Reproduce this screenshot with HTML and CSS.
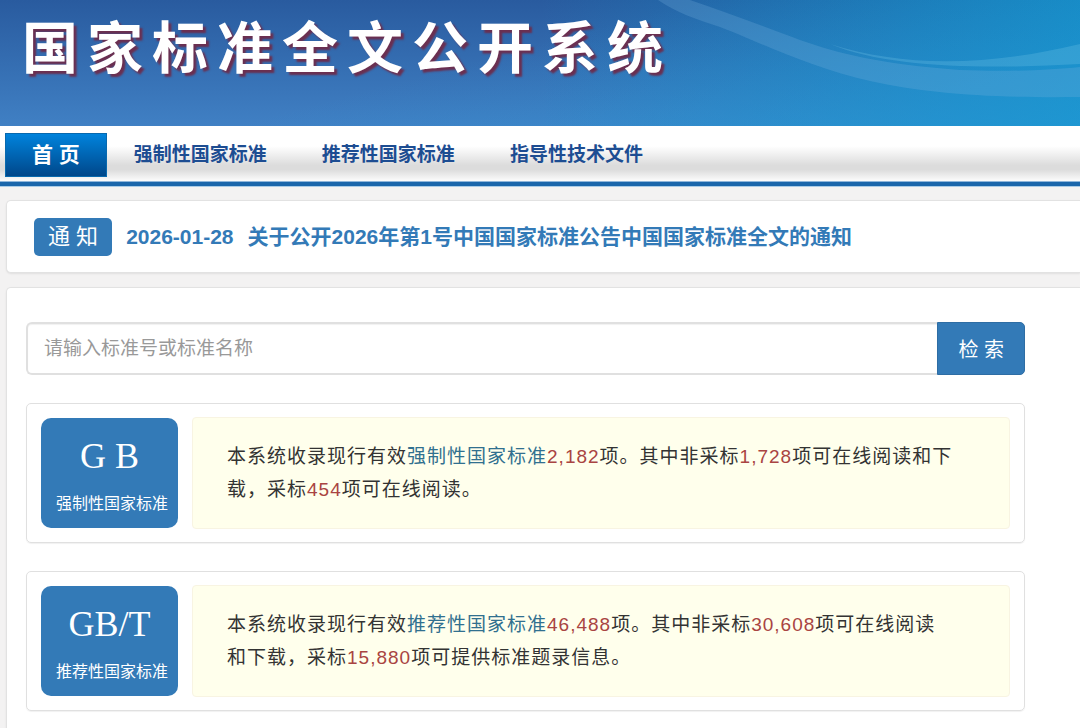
FILE: index.html
```html
<!DOCTYPE html>
<html lang="zh-CN">
<head>
<meta charset="utf-8">
<meta name="viewport" content="width=device-width, initial-scale=1">
<title>国家标准全文公开系统</title>
<link rel="stylesheet" href="styles.css">
</head>
<body class="page">
<header class="banner">
  <svg class="banner-art" viewBox="0 0 440 126" width="440" height="126" aria-hidden="true">
    <path d="M18 0 H50 C85 12 120 25 160 40 C200 54 240 64 320 70 C370 72 410 70 440 67 V97 C350 98 290 94 230 81 C170 68 110 38 80 27 C58 20 35 12 18 0Z" fill="#7bb4e0" fill-opacity=".25"/>
    <path d="M190 44 C260 66 340 68 440 44 V64 C350 69 250 69 190 44Z" fill="#7bcbec" fill-opacity=".25"/>
  </svg>
  <h1 class="banner-title">国家标准全文公开系统</h1>
</header>
<nav class="nav" aria-label="主导航">
  <a class="nav-link nav-link-active" href="#" aria-current="page">首 页</a>
  <a class="nav-link" href="#gb">强制性国家标准</a>
  <a class="nav-link" href="#gbt">推荐性国家标准</a>
  <a class="nav-link" href="#gbz">指导性技术文件</a>
</nav>
<section class="panel notice">
  <span class="notice-tag">通 知</span>
  <a class="notice-link" href="#notice"><time>2026-01-28</time><span>关于公开2026年第1号中国国家标准公告中国国家标准全文的通知</span></a>
</section>
<main class="panel content">
  <form class="search" role="search">
    <input class="search-input" type="text" aria-label="标准号或标准名称" placeholder="请输入标准号或标准名称">
    <button class="search-button" type="submit">检 索</button>
  </form>
  <section class="card" id="gb">
    <a class="badge" href="#gb"><span class="badge-code">G B</span><span class="badge-name">强制性国家标准</span></a>
    <p class="summary">本系统收录现行有效<a class="summary-link" href="#gb">强制性国家标准</a><span class="count">2,182</span>项。其中非采标<span class="count">1,728</span>项可在线阅读和下载，采标<span class="count">454</span>项可在线阅读。</p>
  </section>
  <section class="card" id="gbt">
    <a class="badge" href="#gbt"><span class="badge-code">GB/T</span><span class="badge-name">推荐性国家标准</span></a>
    <p class="summary">本系统收录现行有效<a class="summary-link" href="#gbt">推荐性国家标准</a><span class="count">46,488</span>项。其中非采标<span class="count">30,608</span>项可在线阅读和下载，采标<span class="count">15,880</span>项可提供标准题录信息。</p>
  </section>
</main>
</body>
</html>
```

FILE: styles.css
```css
* {
  box-sizing: border-box;
}

.page {
  display: flex;
  flex-direction: column;
  min-height: 100vh;
  margin: 0;
  background: #f3f2f2;
  color: #333;
  font-family: "Liberation Sans", "Noto Sans CJK SC", sans-serif;
}

a {
  text-decoration: none;
}

.banner {
  position: relative;
  min-height: 126px;
  padding: 9px 22px;
  background:
    linear-gradient(165deg, transparent 45%, rgb(36 160 220 / 45%) 100%),
    linear-gradient(to right, transparent 50%, rgb(16 146 202 / 80%) 100%),
    linear-gradient(#295b9f, #4080c4);
}

.banner-art {
  position: absolute;
  top: 0;
  right: 0;
}

.banner-title {
  position: relative;
  margin: 0;
  color: #fff;
  font-size: 56px;
  font-weight: 700;
  line-height: 80px;
  letter-spacing: 9px;
  text-shadow: 3px 3px 2px #6b2f50;
}

.nav {
  display: flex;
  align-items: center;
  gap: 55px;
  height: 60px;
  padding: 2px 5px 0;
  border-bottom: 4px solid #1a66ab;
  background: linear-gradient(#fff 36%, #dcdcdc 70%, #dcdcdc 78%, #fff);
  box-shadow: inset 0 -1px 0 #8fb6da, 0 1px 0 #a9cbe6;
}

.nav-link {
  color: #1d4d92;
  font-size: 19px;
  font-weight: 700;
  line-height: 44px;
}

.nav-link-active {
  margin-right: -28px;
  padding: 0 26px;
  border: 1px solid #0869ae;
  background: linear-gradient(#0083dc, #00478a);
  color: #fff;
  font-size: 21px;
  line-height: 42px;
}

.panel {
  margin-left: 6px;
  border: 1px solid #e2e2e2;
  border-right: 0;
  border-radius: 5px 0 0 5px;
  background: #fff;
  box-shadow: 0 1px 2px rgb(0 0 0 / 8%);
}

.notice {
  display: flex;
  align-items: center;
  gap: 14px;
  min-height: 73px;
  margin-top: 14px;
  padding: 0 27px;
}

.notice-tag {
  padding: 0 14px;
  border-radius: 5px;
  background: #337ab7;
  color: #fff;
  font-size: 22px;
  line-height: 38px;
}

.notice-link {
  display: flex;
  flex-wrap: wrap;
  align-items: baseline;
  column-gap: 14px;
  color: #337ab7;
  font-size: 21px;
  font-weight: 700;
  line-height: 38px;
}

.content {
  display: flex;
  flex: 1;
  flex-direction: column;
  gap: 28px;
  margin-top: 14px;
  padding: 34px 55px 16px 19px;
  border-bottom: 0;
  border-bottom-left-radius: 0;
}

.search {
  display: flex;
}

.search-input {
  flex: 1;
  min-width: 0;
  height: 53px;
  padding: 0 16px;
  border: 2px solid #e0e0e0;
  border-right: 0;
  border-radius: 6px 0 0 6px;
  background: #fff;
  box-shadow: inset 0 1px 1px rgb(0 0 0 / 6%);
  color: #333;
  font: inherit;
  font-size: 19px;
}

.search-input::placeholder {
  color: #999;
  opacity: 1;
}

.search-button {
  padding: 0 20px;
  border: 1px solid #2e6da4;
  border-radius: 0 5px 5px 0;
  background: #337ab7;
  color: #fff;
  font: inherit;
  font-size: 20px;
}

.card {
  display: flex;
  gap: 14px;
  padding: 13px 14px;
  border: 1px solid #e0e0e0;
  border-radius: 5px;
  box-shadow: 0 1px 1px rgb(0 0 0 / 6%);
}

.badge {
  display: flex;
  flex: none;
  flex-direction: column;
  gap: 12px;
  width: 137px;
  margin: 1px 0;
  padding: 14px 8px 10px 15px;
  border-radius: 10px;
  background: #337ab7;
  color: #fff;
}

.badge-code {
  padding-right: 7px;
  font-family: "Liberation Serif", serif;
  font-size: 36px;
  line-height: 48px;
  text-align: center;
}

.badge-name {
  font-size: 16px;
  line-height: 24px;
  white-space: nowrap;
}

.summary {
  flex: 1;
  min-height: 112px;
  margin: 0;
  padding: 22px 54px 22px 34px;
  border: 1px solid #f8f4e2;
  border-radius: 4px;
  background: #ffffec;
  font-size: 19px;
  line-height: 33px;
  letter-spacing: 1px;
}

.summary-link {
  color: #31708f;
}

.count {
  color: #a94442;
}
```
